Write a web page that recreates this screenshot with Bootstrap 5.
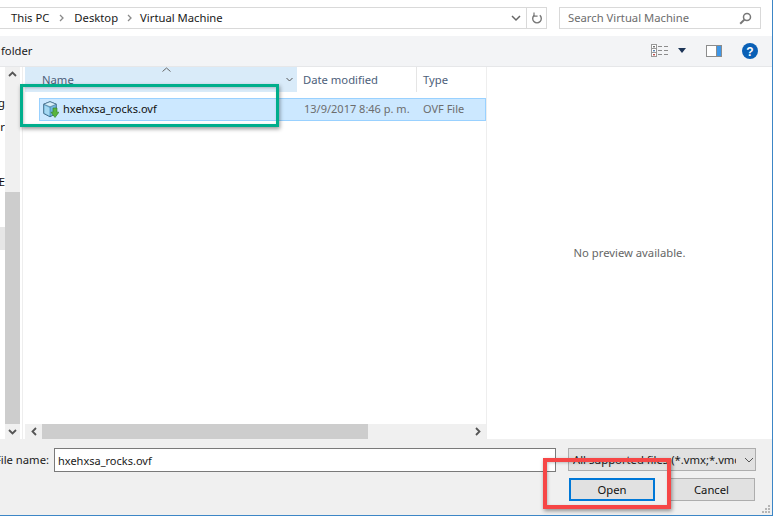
<!DOCTYPE html>
<html lang="en">
<head>
  <meta charset="UTF-8" />
  <meta name="viewport" content="width=device-width, initial-scale=1.0" />
  <title>Open file</title>
  <link href="https://cdn.jsdelivr.net/npm/bootstrap@5.3.0/dist/css/bootstrap.min.css" rel="stylesheet">
  <script src="https://cdn.jsdelivr.net/npm/bootstrap@5.3.0/dist/js/bootstrap.bundle.min.js"></script>
  <style>
    html, body { height: 517px; overflow: hidden; }
    body { font-family: "Noto Sans", "Open Sans", sans-serif; font-size: 11.25px; line-height: 16px; color: #1a1a1a; background: #fff; position: relative; }
    .dlg { width: 773px; height: 516px; border-right: 1px solid #3c86c6; border-bottom: 1px solid #3c86c6; }
    .addr-row { height: 36px; padding-top: 7px; }
    .addr-box { width: 547px; height: 22px; border: 1px solid #d9d9d9; border-left: 0; margin-right: 12px; }
    .addr-path { padding-left: 11px; gap: 10px; }
    .addr-chev2 { margin-left: -1px; }
    .addr-last { margin-left: -2px; }
    .addr-drop { width: 21px; }
    .addr-refresh { width: 20px; border-left: 1px solid #d9d9d9; }
    .search-box { width: 202px; height: 22px; border: 1px solid #d9d9d9; padding: 0 8px; color: #6d6d6d; }
    .tool-row { height: 31px; background: #f3f4f6; border-bottom: 1px solid #e6e7e9; padding-right: 14px; }
    .tool-folder { margin-left: 1px; }
    .tool-icons { gap: 20px; }
    .view-btn { gap: 10px; }
    .main-row { height: 373px; }
    .nav-pane { width: 23px; border-right: 1px solid #eee; }
    .nav-text { width: 5px; }
    .nav-frag { height: 16px; width: 5px; overflow: hidden; display: flex; justify-content: flex-end; color: #111; }
    .frag-g { margin-top: 28px; }
    .frag-r { margin-top: 8px; }
    .frag-e { margin-top: 39px; }
    .nav-sel { width: 5px; height: 23px; background: #e6e6e6; margin-top: 37px; }
    .vbar { width: 15px; background: #f0f0f0; }
    .vbar-btn { height: 15px; }
    .vbar-gap { height: 110px; }
    .vbar-thumb { background: #cdcdcd; }
    .list-pane { width: 464px; padding-left: 2px; border-right: 1px solid #eee; }
    .list-head { height: 25px; color: #4c607a; }
    .head-name { width: 256px; background: #d9ebf9; padding-left: 17px; padding-top: 5px; position: relative; }
    .head-sort { position: absolute; left: 137px; top: 0; }
    .head-drop { width: 16px; background: #d9ebf9; }
    .head-date { width: 120px; padding-left: 6px; padding-top: 5px; border-right: 1px solid #e5e5e5; }
    .head-type { padding-left: 6px; padding-top: 5px; }
    .file-row { height: 23px; margin: 6px 0 0 14px; background: #cce8ff; border: 1px solid #99d1ff; color: #111; font-size: 11px; }
    .file-ico { margin-left: 3px; margin-right: 4px; }
    .file-name { width: 241px; }
    .file-date { width: 119px; color: #6d6d6d; }
    .file-type { color: #6d6d6d; }
    .hbar { height: 15px; background: #f0f0f0; }
    .hbar-btn { width: 17px; }
    .hbar-thumb { width: 326px; background: #cdcdcd; }
    .preview-pane { color: #666; }
    .foot-row { height: 76px; background: #f0f0f0; padding-top: 9px; }
    .fname-lbl { width: 54px; padding-right: 5px; white-space: nowrap; overflow: hidden; display: flex; justify-content: flex-end; }
    .fname-input { width: 502px; height: 24px; border: 1px solid #7a7a7a; background: #fff; padding-left: 3px; padding-top: 1px; margin-right: 12px; font-size: 11px; }
    .ftype-box { width: 188px; height: 23px; border: 1px solid #adadad; background: #e1e1e1; padding-left: 4px; white-space: nowrap; }
    .ftype-text { width: 163px; overflow: hidden; }
    .foot-btns { margin: 6px 0 0 569px; gap: 13px; }
    .dlg-btn { width: 87px; height: 23px; border: 1px solid #adadad; background: #e1e1e1; color: #111; font-size: 11.25px; line-height: 1; padding: 0; border-radius: 0; }
    .dlg-btn-main { width: 86px; border: 2px solid #0078d7; }
    .resize-grip { position: absolute; right: 3px; bottom: 3px; }
    .mark-green { position: absolute; left: 20px; top: 84px; width: 259px; height: 43px; border: 3px solid #00ae8c; box-shadow: 1px 2px 4px rgba(0,0,0,.4), inset 1px 1px 3px rgba(0,0,0,.22); }
    .mark-red { position: absolute; left: 543px; top: 458px; width: 128px; height: 51px; border: 4px solid #f64646; box-shadow: 1px 2px 4px rgba(0,0,0,.4), inset 1px 1px 3px rgba(0,0,0,.22); }
  </style>
</head>

<body>
  <div class="dlg d-flex flex-column">
    <div class="addr-row d-flex">
      <div class="addr-box d-flex align-items-center">
        <div class="addr-path d-flex align-items-center flex-grow-1">
          <span>This PC</span>
          <svg width="5" height="8" viewBox="0 0 5 8"><path d="M1 1l3 3-3 3" fill="none" stroke="#8a8a8a" stroke-width="1.3"/></svg>
          <span>Desktop</span>
          <svg class="addr-chev2" width="5" height="8" viewBox="0 0 5 8"><path d="M1 1l3 3-3 3" fill="none" stroke="#8a8a8a" stroke-width="1.3"/></svg>
          <span class="addr-last">Virtual Machine</span>
        </div>
        <div class="addr-drop d-flex justify-content-center">
          <svg width="10" height="7" viewBox="0 0 10 7"><path d="M1 1l4 4 4-4" fill="none" stroke="#666" stroke-width="1.5"/></svg>
        </div>
        <div class="addr-refresh h-100 d-flex align-items-center justify-content-center">
          <svg width="12" height="13" viewBox="0 0 12 13"><path d="M3.2 3.3a4.3 4.3 0 1 0 5.6 0" fill="none" stroke="#777" stroke-width="1.4"/><path d="M3 .5v3.6h3.6" fill="none" stroke="#777" stroke-width="1.2"/></svg>
        </div>
      </div>
      <div class="search-box d-flex align-items-center justify-content-between">
        <span>Search Virtual Machine</span>
        <svg width="13" height="13" viewBox="0 0 13 13"><circle cx="8" cy="5" r="3.5" fill="none" stroke="#777" stroke-width="1.5"/><path d="M5.4 7.6L1.2 11.8" stroke="#777" stroke-width="2"/></svg>
      </div>
    </div>

    <div class="tool-row d-flex align-items-center justify-content-between">
      <span class="tool-folder">folder</span>
      <div class="tool-icons d-flex align-items-center">
        <div class="view-btn d-flex align-items-center">
          <svg width="17" height="13" viewBox="0 0 17 13">
            <rect x=".5" y=".5" width="5" height="12" fill="#fff" stroke="#999"/>
            <path d="M1 4.5h4M1 8.5h4" stroke="#999"/>
            <rect x="2" y="2" width="2" height="1.4" fill="#777"/><rect x="2" y="6" width="2" height="1.4" fill="#5a87b8"/><rect x="2" y="10" width="2" height="1.4" fill="#c0504d"/>
            <path d="M7 2.500h4M13 2.500h4M7 6.500h4M13 6.500h4M7 10.500h4M13 10.500h4" stroke="#8c8c8c"/>
          </svg>
          <svg width="8" height="5" viewBox="0 0 8 5"><path d="M0 0h8L4 5z" fill="#1d3557"/></svg>
        </div>
        <svg width="16" height="12" viewBox="0 0 16 12"><rect x=".5" y=".5" width="15" height="11" fill="#fff" stroke="#8c8c8c"/><rect x="11" y="1" width="4" height="10" fill="#3f97e8"/><path d="M10.500 1v10" stroke="#8c8c8c"/></svg>
        <svg width="16" height="16" viewBox="0 0 16 16"><circle cx="8" cy="8" r="8" fill="#0a60b6"/><text x="8" y="12.500" text-anchor="middle" font-family="Liberation Sans" font-weight="700" font-size="12" fill="#fff">?</text></svg>
      </div>
    </div>

    <div class="main-row d-flex">
      <div class="nav-pane d-flex">
        <div class="nav-text d-flex flex-column">
          <div class="nav-frag frag-g">g</div>
          <div class="nav-frag frag-r">r</div>
          <div class="nav-frag frag-e">E</div>
          <div class="nav-sel"></div>
        </div>
        <div class="vbar d-flex flex-column">
          <div class="vbar-btn d-flex align-items-center justify-content-center">
            <svg width="9" height="6" viewBox="0 0 9 6"><path d="M1 5l3.500-3.500L8 5" fill="none" stroke="#555" stroke-width="1.800"/></svg>
          </div>
          <div class="vbar-gap"></div>
          <div class="vbar-thumb flex-grow-1"></div>
          <div class="vbar-btn d-flex align-items-center justify-content-center">
            <svg width="9" height="6" viewBox="0 0 9 6"><path d="M1 1l3.500 3.500L8 1" fill="none" stroke="#555" stroke-width="1.800"/></svg>
          </div>
        </div>
      </div>

      <div class="list-pane d-flex flex-column">
        <div class="list-head d-flex">
          <div class="head-name">
            Name
            <svg class="head-sort" width="9" height="5" viewBox="0 0 9 5"><path d="M.5 4.500l4-3.500 4 3.500" fill="none" stroke="#666"/></svg>
          </div>
          <div class="head-drop d-flex align-items-center justify-content-center">
            <svg width="7" height="5" viewBox="0 0 7 5"><path d="M.5 1l3 3 3-3" fill="none" stroke="#555"/></svg>
          </div>
          <div class="head-date">Date modified</div>
          <div class="head-type">Type</div>
        </div>
        <div class="file-row d-flex align-items-center">
          <svg class="file-ico" width="16" height="17" viewBox="0 0 16 17">
            <path d="M.7 3.200L7 .7l6.300 2.500v9.300L7 15.800.7 12.500z" fill="#6fb6df" stroke="#47708c"/>
            <path d="M.7 3.200L7 5.900l6.300-2.700L7 .7z" fill="#d5eefa" stroke="#47708c" stroke-width=".7"/>
            <path d="M7 5.900v9.900" stroke="#3a7ea8" stroke-width=".8"/>
            <path d="M1.500 4.500l5 2.200v8l-5-2.600z" fill="#a5d8f2"/>
            <path d="M10 7h4v4.200h2L12 16.500 8 11.200h2z" fill="#5bb53f" stroke="#2f7d22" stroke-width=".6"/>
          </svg>
          <span class="file-name">hxehxsa_rocks.ovf</span>
          <span class="file-date">13/9/2017 8:46 p. m.</span>
          <span class="file-type">OVF File</span>
        </div>
        <div class="flex-grow-1"></div>
        <div class="hbar d-flex align-items-center">
          <div class="hbar-btn d-flex justify-content-center">
            <svg width="6" height="9" viewBox="0 0 6 9"><path d="M5 1L1.500 4.500 5 8" fill="none" stroke="#555" stroke-width="1.800"/></svg>
          </div>
          <div class="hbar-thumb h-100"></div>
          <div class="flex-grow-1"></div>
          <div class="hbar-btn d-flex justify-content-center">
            <svg width="6" height="9" viewBox="0 0 6 9"><path d="M1 1l3.500 3.500L1 8" fill="none" stroke="#555" stroke-width="1.800"/></svg>
          </div>
        </div>
      </div>

      <div class="preview-pane flex-grow-1 d-flex align-items-center justify-content-center">No preview available.</div>
    </div>

    <div class="foot-row">
      <div class="d-flex align-items-start">
        <label class="fname-lbl pt-1" for="fileName"><span>File name:</span></label>
        <div class="fname-input d-flex align-items-center" id="fileName">hxehxsa_rocks.ovf</div>
        <div class="ftype-box d-flex align-items-center">
          <span class="ftype-text">All supported files (*.vmx;*.vmc</span>
          <svg class="ms-2" width="10" height="6" viewBox="0 0 10 6"><path d="M1 1l4 4 4-4" fill="none" stroke="#555"/></svg>
        </div>
      </div>
      <div class="foot-btns d-flex">
        <button type="button" class="btn dlg-btn dlg-btn-main">Open</button>
        <button type="button" class="btn dlg-btn">Cancel</button>
      </div>
    </div>
  </div>

  <svg class="resize-grip" width="9" height="9" viewBox="0 0 9 9" fill="#b5b5b5"><rect x="6" y="0" width="2" height="2"/><rect x="3" y="3" width="2" height="2"/><rect x="6" y="3" width="2" height="2"/><rect x="0" y="6" width="2" height="2"/><rect x="3" y="6" width="2" height="2"/><rect x="6" y="6" width="2" height="2"/></svg>
  <div class="mark-green"></div>
  <div class="mark-red"></div>
</body>
</html>
